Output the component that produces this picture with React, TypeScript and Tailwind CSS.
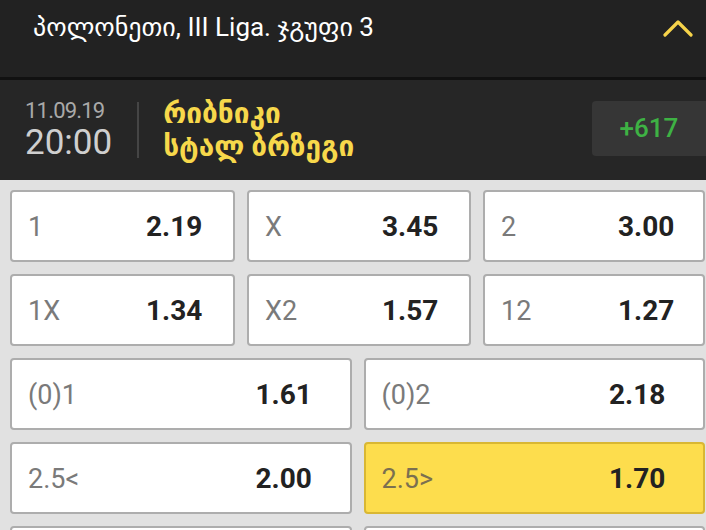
import React from "react";

const font = { fontFamily: "Roboto, 'DejaVu Sans', sans-serif" };

function Tile({ label, odds, oddsW, active }: { label: string; odds: string; oddsW: string; active?: boolean }) {
  return (
    <div
      className={
        "h-[72px] rounded-[4px] border-2 flex items-center " +
        (active ? "bg-[#fddd4d] border-[#d9b733]" : "bg-white border-[#adadad]")
      }
    >
      <div className={"flex-1 pl-[16px] text-[27px] pt-[2px] " + (active ? "text-[#7b7050]" : "text-[#7a7a7a]")}>{label}</div>
      <div className={oddsW + " text-[28px] pt-[2px] font-bold text-[#222]"}>{odds}</div>
    </div>
  );
}

export default function App() {
  return (
    <div className="w-[706px] h-[530px] overflow-hidden bg-[#e1e1e1]" style={font}>
      <div className="h-[77px] bg-[#222222] flex items-start justify-between pl-[33px] pr-[12px] pt-[12px]">
        <div className="text-white text-[26px] leading-[30px]">პოლონეთი, III Liga. ჯგუფი 3</div>
        <svg width="30" height="20" viewBox="0 0 30 20" className="mr-[1px] mt-[6px]">
          <path d="M2 17 L15 4 L28 17" fill="none" stroke="#f6d34a" strokeWidth="3.2" strokeLinecap="round" strokeLinejoin="round" />
        </svg>
      </div>
      <div className="h-[3px] bg-[#111111]" />
      <div className="h-[100px] bg-[#262626] flex items-center pl-[25px]">
        <div className="flex flex-col">
          <div className="text-[22px] leading-[26px] text-[#a9a9a9] tracking-[-0.8px]">11.09.19</div>
          <div className="text-[35px] leading-[38px] text-[#cfcfcf]">20:00</div>
        </div>
        <div className="w-[2px] h-[56px] bg-[#454545] ml-[25px] mr-[24px]" />
        <div className="flex flex-col flex-1 text-[#f7d84b] font-bold text-[28px]">
          <div className="leading-[33px]">რიბნიკი</div>
          <div className="leading-[33px]">სტალ ბრზეგი</div>
        </div>
        <div className="w-[114px] h-[55px] rounded-l-[4px] bg-[#363636] flex items-center justify-center text-[#3eb244] text-[26px] font-medium mb-[3px]">
          +617
        </div>
      </div>
      <div className="pt-[10px] pl-[10px] pr-[1px] flex flex-col gap-[12px]">
        <div className="grid grid-cols-[225px_224px_1fr] gap-x-[12px]">
          <Tile label="1" odds="2.19" oddsW="w-[87px]" />
          <Tile label="X" odds="3.45" oddsW="w-[87px]" />
          <Tile label="2" odds="3.00" oddsW="w-[85px]" />
        </div>
        <div className="grid grid-cols-[225px_224px_1fr] gap-x-[12px]">
          <Tile label="1X" odds="1.34" oddsW="w-[87px]" />
          <Tile label="X2" odds="1.57" oddsW="w-[87px]" />
          <Tile label="12" odds="1.27" oddsW="w-[85px]" />
        </div>
        <div className="grid grid-cols-2 gap-x-[12px]">
          <Tile label="(0)1" odds="1.61" oddsW="w-[94px]" />
          <Tile label="(0)2" odds="2.18" oddsW="w-[94px]" />
        </div>
        <div className="grid grid-cols-2 gap-x-[12px]">
          <Tile label="2.5<" odds="2.00" oddsW="w-[94px]" />
          <Tile label="2.5>" odds="1.70" oddsW="w-[94px]" active />
        </div>
        <div className="grid grid-cols-2 gap-x-[12px]">
          <Tile label="" odds="" oddsW="w-[94px]" />
          <Tile label="" odds="" oddsW="w-[94px]" />
        </div>
      </div>
    </div>
  );
}
